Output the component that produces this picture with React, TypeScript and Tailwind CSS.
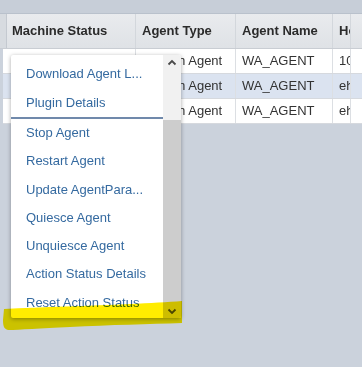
const rows = [
  { status: 'Online', type: 'System Agent', name: 'WA_AGENT', host: '10.14.22.131', alt: false },
  { status: 'Online', type: 'System Agent', name: 'WA_AGENT', host: 'ehost-app01', alt: true },
  { status: 'Online', type: 'System Agent', name: 'WA_AGENT', host: 'ehost-app02', alt: false },
];

const items = [
  'Download Agent L...',
  'Plugin Details',
  '---',
  'Stop Agent',
  'Restart Agent',
  'Update AgentPara...',
  'Quiesce Agent',
  'Unquiesce Agent',
  'Action Status Details',
  'Reset Action Status',
];

const Chevron = ({ up }: { up?: boolean }) => (
  <svg width="10" height="7" viewBox="0 0 10 7" className="block">
    <path
      d={up ? 'M1.5 5.5 L5 2 L8.5 5.5' : 'M1.5 1.5 L5 5 L8.5 1.5'}
      fill="none"
      stroke="#4a4a4a"
      strokeWidth="1.8"
    />
  </svg>
);

const App = () => {
  return (
    <div className="relative w-[362px] h-[367px] overflow-hidden bg-[#cbd2dc] text-[13px] font-['Liberation_Sans',Arial,sans-serif]">
      {/* top strip */}
      <div className="h-[14px] bg-[#c7ced8] border-b border-[#b9c1cc]" />

      {/* grid */}
      <div className="flex flex-col">
        <div className="flex h-[35px] bg-gradient-to-b from-[#e9ebee] to-[#dfe2e6] border-b border-[#c9cdd3] font-bold text-[#2b2b2b]">
          <div className="w-[7px] bg-[#d7dbe0] border-r border-[#c4c9d0]" />
          <div className="w-[129px] flex items-center pl-[5px] border-r border-[#d3d7dc]">Machine Status</div>
          <div className="w-[100px] flex items-center pl-[6px] border-r border-[#d3d7dc]">Agent Type</div>
          <div className="w-[97px] flex items-center pl-[6px] border-r border-[#d3d7dc]">Agent Name</div>
          <div className="w-[17px] shrink-0 flex items-center pl-[6px] whitespace-nowrap overflow-hidden">Host Name</div>
          <div className="flex-1 border-l border-[#d3d7dc]" />
        </div>
        {rows.map((r, i) => (
          <div
            key={i}
            className={`flex h-[25px] ml-[3px] border-b border-[#d6d9de] text-[#333] ${r.alt ? 'bg-[#dbe3f0]' : 'bg-white'}`}
          >
            <div className="w-[4px]" />
            <div className="w-[129px] flex items-center pl-[5px] border-r border-[#dcdfe3] text-[#3a9a3a]">{r.status}</div>
            <div className="w-[100px] flex items-center pl-[6px] border-r border-[#dcdfe3]">{r.type}</div>
            <div className="w-[97px] flex items-center pl-[6px] border-r border-[#dcdfe3]">{r.name}</div>
            <div className="w-[17px] shrink-0 flex items-center pl-[6px] whitespace-nowrap overflow-hidden">{r.host}</div>
            <div className="flex-1 border-l border-[#dcdfe3]" />
          </div>
        ))}
      </div>

      {/* context menu */}
      <div className="absolute left-[11px] top-[55px] w-[170px] h-[263px] flex bg-white rounded-[2px] shadow-[0_1px_4px_rgba(0,0,0,0.35)] overflow-hidden">
        <div className="w-[152px] pt-[5px] flex flex-col text-[#356aa0]">
          {items.map((it, i) =>
            it === '---' ? (
              <div key={i} className="h-[2px] bg-[#7089ab]" />
            ) : (
              <div key={i} className="h-[28.3px] flex items-center pl-[15px] whitespace-nowrap">
                {it}
              </div>
            )
          )}
        </div>
        <div className="w-[18px] flex flex-col bg-[#f1f1f1]">
          <div className="h-[15px] pt-[4px] flex items-start justify-center">
            <Chevron up />
          </div>
          <div className="flex-1 flex flex-col pt-[50px]">
            <div className="flex-1 bg-[#cdcdcd]" />
          </div>
          <div className="h-[16px] pb-[3px] flex items-end justify-center bg-[#cdcdcd]">
            <Chevron />
          </div>
        </div>
      </div>

      {/* highlighter marker annotation */}
      <svg
        className="absolute left-0 top-0 mix-blend-multiply pointer-events-none"
        width="362"
        height="367"
        viewBox="0 0 362 367"
      >
        <path
          d="M4 309 C40 307 90 306 130 304 C150 303 168 302 182 301 L182 323 C150 324 110 325 70 327 C40 328 20 330 8 330 C4 329 3 326 3 320 Z"
          fill="#ffec00"
        />
      </svg>
    </div>
  );
};

export default App;
